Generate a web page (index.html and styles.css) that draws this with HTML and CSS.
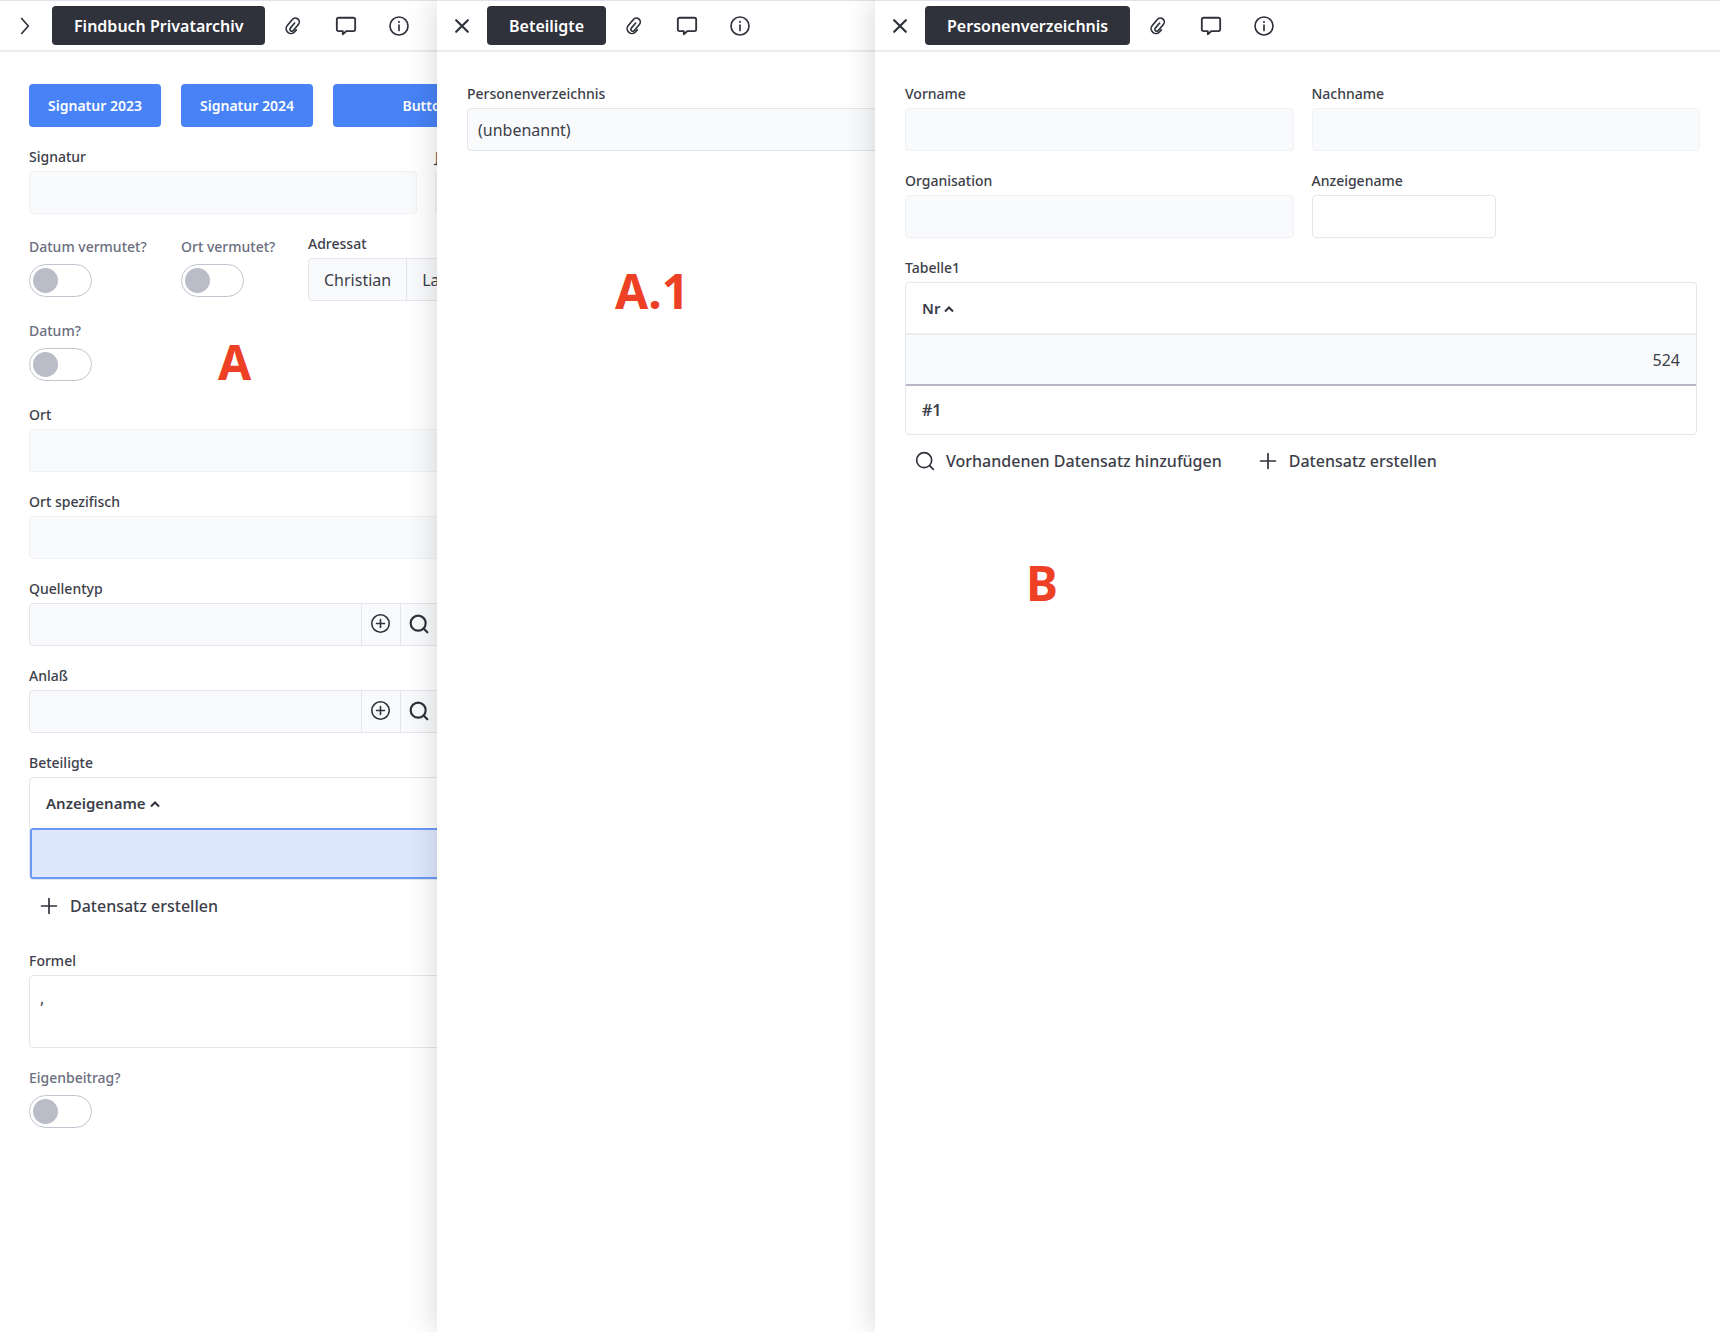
FILE: index.html
```html
<!DOCTYPE html>
<html lang="de">
<head>
<meta charset="utf-8">
<meta name="viewport" content="width=device-width, initial-scale=1">
<title>Findbuch Privatarchiv</title>
<link rel="stylesheet" href="styles.css">
</head>
<body>
<svg class="sprite" aria-hidden="true">
  <symbol id="clip" viewBox="0 0 24 24"><g transform="rotate(40 12 12)"><path d="M18 13v3a5.800 5.800 0 0 1-11.600 0V6.500a4.700 4.700 0 0 1 9.400 0v9.500a2.300 2.300 0 0 1-4.600 0V8"/></g></symbol>
  <symbol id="chat" viewBox="0 0 24 24"><path d="M4 3h16a2 2 0 0 1 2 2v10.500a2 2 0 0 1-2 2h-7.500L8.500 21V17.500H4a2 2 0 0 1-2-2V5a2 2 0 0 1 2-2z"/></symbol>
  <symbol id="info" viewBox="0 0 24 24"><circle cx="12" cy="12" r="10.800"/><path d="M12 10.800V17.500M12 6.800v0.600"/></symbol>
  <symbol id="close" viewBox="0 0 24 24"><path d="M5 5l14 14M19 5L5 19"/></symbol>
  <symbol id="chevron" viewBox="0 0 24 24"><path d="M8 3l8 9-8 9"/></symbol>
  <symbol id="caret" viewBox="0 0 12 12"><path d="M2 8.500l4-4 4 4"/></symbol>
  <symbol id="search" viewBox="0 0 24 24"><circle cx="11" cy="11" r="9"/><path d="M17.500 17.500L22 22"/></symbol>
  <symbol id="plus" viewBox="0 0 24 24"><path d="M12 3v18M3 12h18"/></symbol>
  <symbol id="circle-plus" viewBox="0 0 24 24"><circle cx="12" cy="12" r="11"/><path d="M12 7v10M7 12h10"/></symbol>
</svg>

<div class="workspace">
  <main class="panel panel-root">
    <header class="bar">
      <button class="nav nav-root" type="button" aria-label="Öffnen"><svg class="icon icon-chevron"><use href="#chevron"/></svg></button>
      <button class="title" type="button">Findbuch Privatarchiv</button>
      <button class="tool" type="button" aria-label="Anhänge"><svg class="icon icon-clip"><use href="#clip"/></svg></button>
      <button class="tool" type="button" aria-label="Kommentare"><svg class="icon icon-chat"><use href="#chat"/></svg></button>
      <button class="tool" type="button" aria-label="Info"><svg class="icon"><use href="#info"/></svg></button>
    </header>
    <form class="form">
      <div class="row row-buttons">
        <button class="primary" type="button">Signatur 2023</button>
        <button class="primary" type="button">Signatur 2024</button>
        <button class="primary primary-wide" type="button">Button</button>
      </div>
      <div class="row">
        <div class="field field-half"><label for="signatur">Signatur</label><input class="input" id="signatur" type="text"></div>
        <div class="field field-half"><label for="jahr">Jahr</label><input class="input" id="jahr" type="text"></div>
      </div>
      <div class="row row-end">
        <div class="switch-field switch-first"><label for="datum-vermutet">Datum vermutet?</label><input class="switch" id="datum-vermutet" type="checkbox"></div>
        <div class="switch-field switch-second"><label for="ort-vermutet">Ort vermutet?</label><input class="switch" id="ort-vermutet" type="checkbox"></div>
        <div class="field"><span class="label">Adressat</span>
          <div class="chips"><span class="chip">Christian</span><span class="chip">Lange</span></div>
        </div>
      </div>
      <div class="switch-field"><label for="datum">Datum?</label><input class="switch" id="datum" type="checkbox"></div>
      <div class="field"><label for="ort">Ort</label><input class="input" id="ort" type="text"></div>
      <div class="field"><label for="ort-spezifisch">Ort spezifisch</label><input class="input" id="ort-spezifisch" type="text"></div>
      <div class="field"><label for="quellentyp">Quellentyp</label>
        <div class="lookup">
          <input class="lookup-input" id="quellentyp" type="text">
          <button class="lookup-button" type="button" aria-label="Neu"><svg class="icon icon-circle"><use href="#circle-plus"/></svg></button>
          <button class="lookup-button" type="button" aria-label="Suchen"><svg class="icon icon-bold"><use href="#search"/></svg></button>
        </div>
      </div>
      <div class="field"><label for="anlass">Anlaß</label>
        <div class="lookup">
          <input class="lookup-input" id="anlass" type="text">
          <button class="lookup-button" type="button" aria-label="Neu"><svg class="icon icon-circle"><use href="#circle-plus"/></svg></button>
          <button class="lookup-button" type="button" aria-label="Suchen"><svg class="icon icon-bold"><use href="#search"/></svg></button>
        </div>
      </div>
      <div class="field field-table"><span class="label" id="beteiligte">Beteiligte</span>
        <table class="table" aria-labelledby="beteiligte">
          <thead><tr><th scope="col">Anzeigename<svg class="caret"><use href="#caret"/></svg></th></tr></thead>
          <tbody><tr class="selected"><td></td></tr></tbody>
        </table>
        <div class="actions"><button class="action" type="button"><svg class="icon"><use href="#plus"/></svg>Datensatz erstellen</button></div>
      </div>
      <div class="field"><label for="formel">Formel</label><textarea class="formula" id="formel" readonly>,</textarea></div>
      <div class="switch-field"><label for="eigenbeitrag">Eigenbeitrag?</label><input class="switch" id="eigenbeitrag" type="checkbox"></div>
    </form>
    <span class="mark mark-a">A</span>
  </main>

  <section class="panel panel-over">
    <header class="bar">
      <button class="nav" type="button" aria-label="Schließen"><svg class="icon icon-close"><use href="#close"/></svg></button>
      <button class="title" type="button">Beteiligte</button>
      <button class="tool" type="button" aria-label="Anhänge"><svg class="icon icon-clip"><use href="#clip"/></svg></button>
      <button class="tool" type="button" aria-label="Kommentare"><svg class="icon icon-chat"><use href="#chat"/></svg></button>
      <button class="tool" type="button" aria-label="Info"><svg class="icon"><use href="#info"/></svg></button>
    </header>
    <form class="form">
      <div class="field"><label for="person">Personenverzeichnis</label><input class="input input-linked" id="person" type="text" value="(unbenannt)"></div>
    </form>
    <span class="mark mark-a1">A.1</span>
  </section>

  <section class="panel panel-over panel-last">
    <header class="bar">
      <button class="nav" type="button" aria-label="Schließen"><svg class="icon icon-close"><use href="#close"/></svg></button>
      <button class="title" type="button">Personenverzeichnis</button>
      <button class="tool" type="button" aria-label="Anhänge"><svg class="icon icon-clip"><use href="#clip"/></svg></button>
      <button class="tool" type="button" aria-label="Kommentare"><svg class="icon icon-chat"><use href="#chat"/></svg></button>
      <button class="tool" type="button" aria-label="Info"><svg class="icon"><use href="#info"/></svg></button>
    </header>
    <form class="form">
      <div class="pair">
        <div class="field"><label for="vorname">Vorname</label><input class="input" id="vorname" type="text"></div>
        <div class="field"><label for="nachname">Nachname</label><input class="input" id="nachname" type="text"></div>
        <div class="field"><label for="organisation">Organisation</label><input class="input" id="organisation" type="text"></div>
        <div class="field"><label for="anzeigename">Anzeigename</label><input class="input input-plain" id="anzeigename" type="text" readonly></div>
      </div>
      <div class="field field-table"><span class="label" id="tabelle1">Tabelle1</span>
        <table class="table" aria-labelledby="tabelle1">
          <thead><tr><th scope="col">Nr<svg class="caret"><use href="#caret"/></svg></th></tr></thead>
          <tbody><tr class="filled"><td>524</td></tr></tbody>
          <tfoot><tr><td>#1</td></tr></tfoot>
        </table>
        <div class="actions">
          <button class="action" type="button"><svg class="icon"><use href="#search"/></svg>Vorhandenen Datensatz hinzufügen</button>
          <button class="action" type="button"><svg class="icon"><use href="#plus"/></svg>Datensatz erstellen</button>
        </div>
      </div>
    </form>
    <span class="mark mark-b">B</span>
  </section>
</div>
</body>
</html>
```

FILE: styles.css
```css
:root {
  --ink: #2f313b;
  --text: #3c3e49;
  --muted: #6b6e80;
  --line: #e5e6eb;
  --line-soft: #f0f1f4;
  --fill: #f9fafc;
  --blue: #4783f6;
}

* { box-sizing: border-box; }

body {
  margin: 0;
  background: #fff;
  color: var(--text);
  font: 400 16px/24px "Noto Sans", sans-serif;
}

button, input, textarea { font: inherit; color: inherit; margin: 0; }
button { padding: 0; border: 0; background: none; }
.sprite { display: none; }

.workspace {
  display: grid;
  grid-template-columns: minmax(0, 437fr) minmax(0, 438fr) minmax(0, 845fr);
  min-height: 100vh;
  overflow: hidden;
}

.panel {
  position: relative;
  overflow: hidden;
  background: #fff;
}
.panel-over { box-shadow: 0 0 30px rgba(0, 0, 0, 0.17); }

/* Header bar */
.bar {
  display: flex;
  align-items: center;
  height: 52px;
  border-top: 1px solid #e2e2ea;
  border-bottom: 2px solid #ebebef;
}
.nav {
  display: flex;
  justify-content: center;
  flex: none;
  width: 50px;
}
.nav-root { margin-right: 2px; }
.title {
  flex: none;
  height: 39px;
  margin-right: 1px;
  padding: 0 22px;
  border-radius: 4px;
  background: var(--ink);
  color: #fff;
  font-weight: 600;
}
.tool {
  display: flex;
  align-items: center;
  justify-content: center;
  flex: none;
  width: 53px;
}

.icon {
  width: 20px;
  height: 20px;
  fill: none;
  stroke: var(--ink);
  stroke-width: 2;
  stroke-linecap: round;
  stroke-linejoin: round;
}
.icon-chat { width: 24px; height: 22px; }
.icon-clip { width: 22px; height: 20px; }
.icon-close { stroke-width: 2.600; }
.icon-bold { stroke-width: 2.600; }
.icon-circle { width: 19px; height: 19px; }

/* Forms */
.form {
  display: flex;
  flex-direction: column;
  gap: 20px;
  padding: 32px 20px 32px 30px;
}
.panel-root .form { width: 874px; padding-left: 29px; }
.panel-over:not(.panel-last) .form { width: 600px; }

.row { display: flex; gap: 18px; }
.row-buttons { gap: 20px; }
.row-end { gap: 0; align-items: flex-end; }
.pair {
  display: grid;
  grid-template-columns: 1fr 1fr;
  gap: 20px 18px;
}

.primary {
  width: 132px;
  height: 43px;
  border-radius: 4px;
  background: var(--blue);
  color: #fff;
  font-size: 14px;
  font-weight: 600;
}
.primary-wide { width: 186px; }

.field { display: flex; flex-direction: column; gap: 4px; }
.field-half { flex: none; width: 388px; }
label, .label {
  font-size: 14px;
  line-height: 20px;
  font-weight: 500;
}

.input {
  width: 100%;
  height: 43px;
  padding: 0 10px;
  border: 1px solid var(--line-soft);
  border-radius: 4px;
  background: var(--fill);
}
.input-linked { border-color: var(--line); }
.input-plain { width: 184px; border-color: var(--line); background: #fff; }

.formula {
  height: 73px;
  padding: 12px 10px;
  border: 1px solid var(--line);
  border-radius: 4px;
  background: #fff;
  line-height: 20px;
  resize: none;
}

.chips {
  display: flex;
  height: 43px;
  border: 1px solid var(--line);
  border-radius: 4px;
  background: var(--fill);
}
.chip { padding: 9px 15px; }
.chip + .chip { border-left: 1px solid var(--line); }

.switch-field {
  display: flex;
  flex-direction: column;
  align-items: flex-start;
  gap: 7px;
  padding-bottom: 4px;
  color: var(--muted);
}
.switch-first { width: 152px; }
.switch-second { width: 127px; }
.switch {
  appearance: none;
  display: flex;
  align-items: center;
  width: 63px;
  height: 33px;
  padding: 0 3px;
  border: 1px solid #c3c4d0;
  border-radius: 17px;
  background: #fff;
}
.switch::before {
  content: "";
  width: 25px;
  height: 25px;
  border-radius: 50%;
  background: #babcc8;
}

.lookup {
  display: flex;
  width: 411px;
  height: 43px;
  border: 1px solid var(--line);
  border-radius: 4px;
  background: var(--fill);
}
.lookup-input {
  flex: 1;
  min-width: 0;
  padding: 0 10px;
  border: 0;
  background: none;
}
.lookup-button {
  display: flex;
  align-items: center;
  justify-content: center;
  width: 39px;
  padding: 0 2px 2px 0;
  border-left: 1px solid var(--line);
}

/* Tables */
.table {
  width: 100%;
  border: 1px solid var(--line);
  border-radius: 4px;
  border-spacing: 0;
}
.field-table { padding-bottom: 3px; }
.panel-last .field-table { padding-right: 3px; }
.table th {
  height: 50px;
  padding: 0 16px;
  font-size: 15px;
  font-weight: 600;
  text-align: left;
}
.table td { height: 51px; padding: 0 16px; text-align: right; }
.caret {
  width: 12px;
  height: 12px;
  margin-left: 3px;
  vertical-align: -1px;
  fill: none;
  stroke: var(--ink);
  stroke-width: 2;
}
.selected td {
  border: 2px solid #6a9af5;
  border-radius: 3px;
  background: #dee8fd;
}
.filled td {
  height: 53px;
  border-top: 2px solid #ebecf0;
  border-bottom: 2px solid #b6b8c8;
  background: var(--fill);
}
.table tfoot td {
  height: 48px;
  font-weight: 600;
  text-align: left;
}

.actions {
  display: flex;
  align-items: center;
  gap: 36px;
  height: 44px;
  padding-left: 10px;
}
.action {
  display: flex;
  align-items: center;
  gap: 11px;
  font-weight: 500;
}

/* Red letters placed over the panels */
.mark {
  position: absolute;
  color: #ee4024;
  font-size: 48px;
  line-height: 48px;
  font-weight: 700;
}
.mark-a { left: 218px; top: 338px; }
.mark-a1 { left: 178px; top: 267px; }
.mark-b { left: 151px; top: 559px; }
```
